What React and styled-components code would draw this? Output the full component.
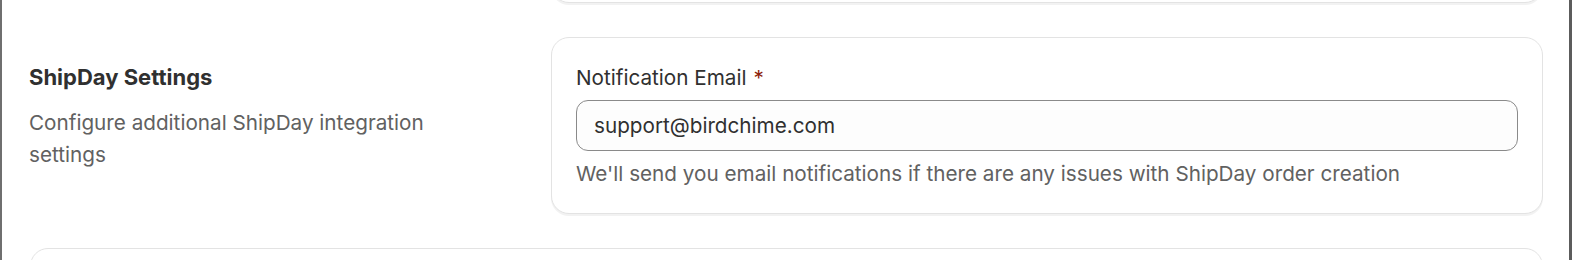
import React from "react";
import styled, { createGlobalStyle } from "styled-components";

const GlobalStyle = createGlobalStyle`
  html, body {
    margin: 0;
    padding: 0;
    background: #ffffff;
    overflow: hidden;
  }
  body {
    font-family: Inter, "Noto Sans", "Liberation Sans", sans-serif;
    -webkit-font-smoothing: antialiased;
  }
`;

const Frame = styled.div`
  box-sizing: border-box;
  width: 100vw;
  height: 260px;
  overflow: hidden;
  border-left: 2px solid #6f6f6f;
  border-right: 3px solid #5c5c5c;
  background: #ffffff;
  padding: 0 26px 0 27px;
`;

const Card = styled.div`
  box-sizing: border-box;
  background: #ffffff;
  border: 1px solid #e3e3e3;
  border-radius: 18px;
  box-shadow: 0 2px 0 rgba(26, 26, 26, 0.06);
  padding: 24px;
`;

const TopCard = styled(Card)`
  height: 40px;
  padding: 0;
  margin-top: -37px;
  margin-left: 522px;
`;

const Section = styled.div`
  display: grid;
  grid-template-columns: 522px 1fr;
  margin-top: 34px;
`;

const Aside = styled.div`
  padding-top: 25px;
  max-width: 440px;
`;

const Heading = styled.h2`
  margin: 0;
  font-size: 22px;
  line-height: 30px;
  font-weight: 650;
  color: #303030;
`;

const Description = styled.p`
  margin: 15px 0 0;
  font-size: 20.7px;
  line-height: 32px;
  color: #616161;
`;

const Label = styled.label`
  display: block;
  font-size: 20.7px;
  line-height: 30px;
  padding-top: 1px;
  color: #303030;
`;

const Required = styled.span`
  color: #8e1f0b;
  margin-left: 7px;
`;

const Input = styled.input`
  display: block;
  box-sizing: border-box;
  width: 100%;
  height: 51px;
  margin-top: 7px;
  padding: 0 17px;
  border: 1px solid #8a8a8a;
  border-radius: 12px;
  background: #fdfdfd;
  font-family: inherit;
  font-size: 20.7px;
  color: #303030;
  outline: none;
`;

const Help = styled.p`
  margin: 8px 0 0;
  font-size: 20.7px;
  line-height: 30px;
  color: #616161;
`;

const BottomCard = styled(Card)`
  margin-top: 34px;
  margin-left: 1px;
  height: 60px;
`;

export default function App() {
  return (
    <>
      <GlobalStyle />
      <Frame>
        <TopCard />
        <Section>
          <Aside>
            <Heading>ShipDay Settings</Heading>
            <Description>Configure additional ShipDay integration settings</Description>
          </Aside>
          <Card>
            <Label htmlFor="notify-email">
              Notification Email<Required>*</Required>
            </Label>
            <Input id="notify-email" type="email" defaultValue="support@birdchime.com" />
            <Help>
              We'll send you email notifications if there are any issues with ShipDay order creation
            </Help>
          </Card>
        </Section>
        <BottomCard />
      </Frame>
    </>
  );
}
